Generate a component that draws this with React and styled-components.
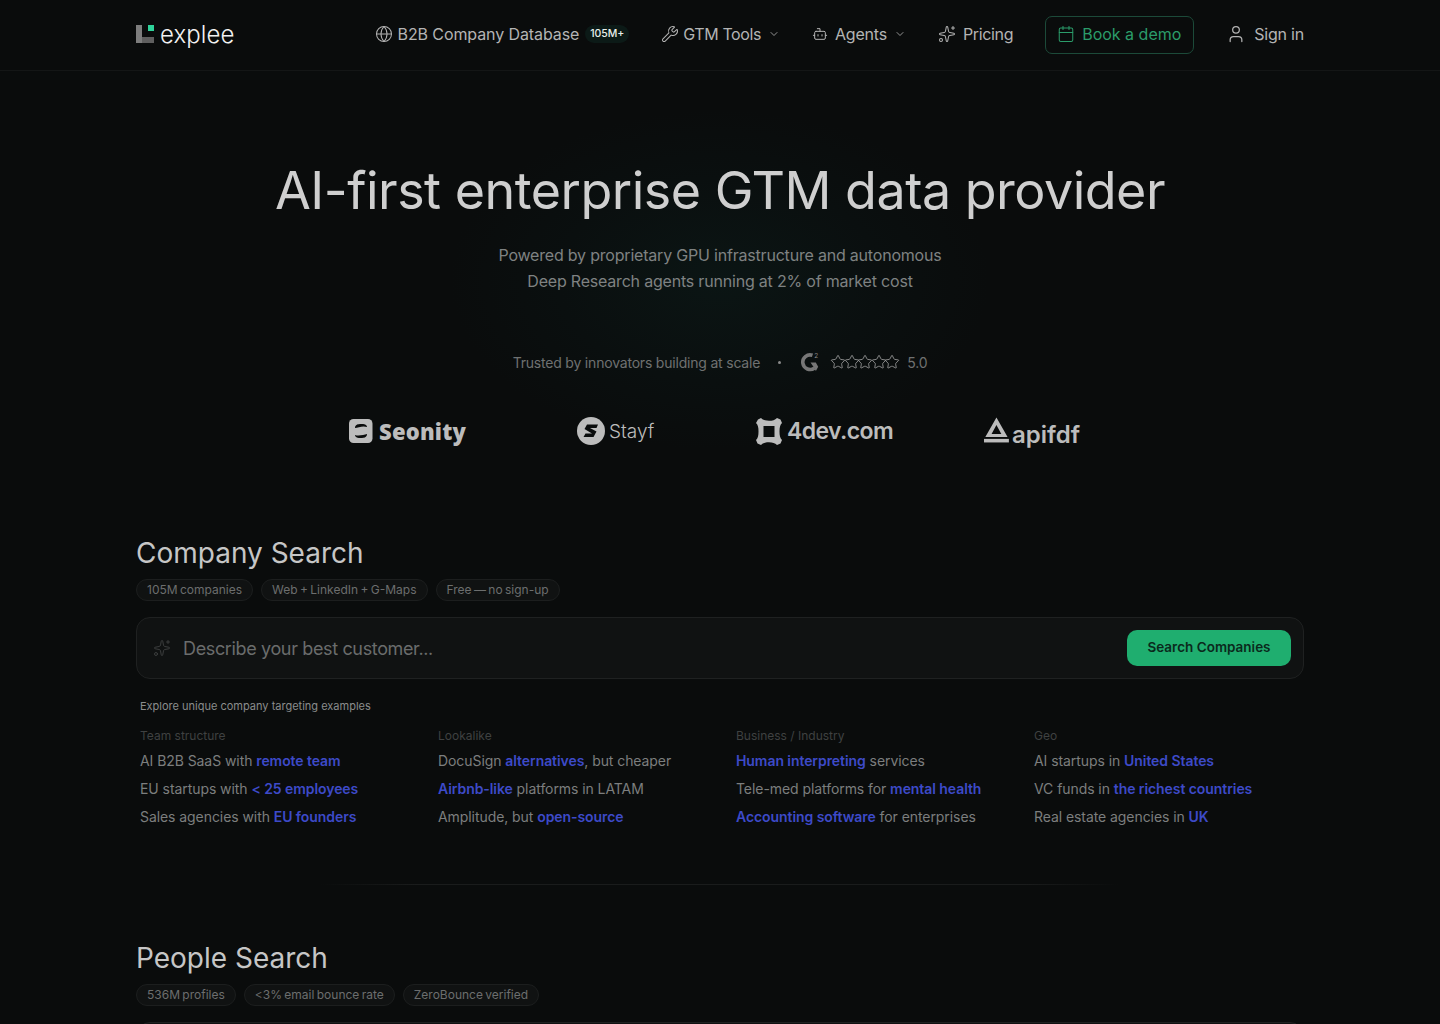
import React from "react";
import styled, { createGlobalStyle } from "styled-components";
import { Globe, Wrench, ChevronDown, Bot, Sparkles, Calendar, User, Star } from "lucide-react";

const GlobalStyle = createGlobalStyle`
  html, body {
    margin: 0;
    padding: 0;
    background: #0a0c0c;
    overflow: hidden;
    height: 1024px;
  }
  body {
    font-family: Inter, "Liberation Sans", sans-serif;
    color: #c8c8c8;
  }
  * { box-sizing: border-box; }
`;

const Page = styled.div`
  position: relative;
  width: 1440px;
  height: 1024px;
  overflow: hidden;
  background: radial-gradient(ellipse 270px 170px at 720px 280px, #0b1514 0%, #0a0f0f 60%, #0a0c0c 100%);
`;

const Header = styled.header`
  height: 71px;
  padding: 0 136px 3px;
  display: flex;
  align-items: center;
  justify-content: space-between;
  border-bottom: 1px solid #141616;
`;

const Brand = styled.div`
  display: flex;
  align-items: center;
  gap: 6px;
`;

const BrandName = styled.span`
  font-size: 24px;
  font-weight: 300;
  letter-spacing: 0.1px;
  color: #f2f2f2;
  line-height: 1;
  margin-top: 3px;
`;

const Nav = styled.nav`
  display: flex;
  align-items: center;
`;

const NavItem = styled.a`
  display: flex;
  align-items: center;
  gap: ${p => p.$gap || 6}px;
  margin-left: ${p => p.$ml || 0}px;
  font-size: 16px;
  letter-spacing: ${p => p.$ls ?? -0.2}px;
  color: #b4b4b4;
  white-space: nowrap;
  svg { flex-shrink: 0; }
`;

const NavChevron = styled(ChevronDown)`
  margin-left: 3px;
`;

const NavBadge = styled.span`
  height: 18px;
  width: 44px;
  margin-left: 1px;
  display: flex;
  align-items: center;
  justify-content: center;
  border-radius: 9px;
  background: #0c1a17;
  color: #e8efec;
  font-size: 10.5px;
  letter-spacing: 0;
  font-weight: 500;
`;

const DemoButton = styled.a`
  display: flex;
  align-items: center;
  gap: 7px;
  width: 149px;
  height: 38px;
  margin: 2px 0 0 32px;
  padding: 0 0 2px 11px;
  border: 1px solid #1c4a39;
  border-radius: 7px;
  color: #2b9c6a;
  font-size: 16px;
  letter-spacing: 0;
  white-space: nowrap;
`;

const Hero = styled.section`
  display: flex;
  flex-direction: column;
  align-items: center;
  padding-top: 84px;
`;

const Title = styled.h1`
  margin: 0;
  font-size: 52px;
  font-weight: 400;
  line-height: 72px;
  letter-spacing: -0.5px;
  color: #cfcfcf;
`;

const Subtitle = styled.p`
  margin: 15px 0 0;
  font-size: 16px;
  line-height: 26px;
  letter-spacing: -0.2px;
  color: #7f8282;
  text-align: center;
`;

const Trust = styled.div`
  display: flex;
  align-items: center;
  margin-top: 56px;
  height: 24px;
  font-size: 14px;
  letter-spacing: -0.2px;
  color: #6f7171;
`;

const Dot = styled.span`
  width: 3px;
  height: 3px;
  margin: 0 19px 0 18px;
  background: #8a8a8a;
  border-radius: 50%;
`;

const Stars = styled.div`
  display: flex;
  margin: 0 8px 0 11px;
  color: #a4a4a4;
  svg { margin: 0 -1.2px; }
`;

const LogoRow = styled.div`
  display: flex;
  align-items: center;
  justify-content: center;
  margin-top: 27px;
  height: 60px;
  width: 760px;
  padding-right: 11px;
`;

const LogoItem = styled.div`
  width: ${p => p.$w}px;
  display: flex;
  align-items: ${p => p.$align || "center"};
  gap: ${p => p.$gap || 6}px;
  color: #bcbcbc;
  flex-shrink: 0;
`;

const LogoWord = styled.span`
  font-family: ${p => p.$font || "Inter"}, sans-serif;
  font-size: ${p => p.$size}px;
  font-weight: ${p => p.$weight};
  letter-spacing: ${p => p.$ls || 0}px;
  line-height: 1;
`;

const ApifdfSvg = styled.svg`
  margin-bottom: 3px;
`;

const Section = styled.section`
  width: 1168px;
  margin: 0 auto;
  padding-top: ${p => p.$pt}px;
`;

const SectionTitle = styled.h2`
  margin: 0;
  font-size: 28px;
  font-weight: 400;
  line-height: 36px;
  color: #c6c6c6;
`;

const ChipRow = styled.div`
  display: flex;
  gap: 8px;
  margin-top: 8px;
`;

const Chip = styled.span`
  height: 22px;
  padding: 0 10px 2px;
  display: flex;
  align-items: center;
  border: 1px solid #1c1e1e;
  border-radius: 11px;
  background: #101212;
  color: #6c6e6e;
  font-size: 12px;
  word-spacing: -1px;
  white-space: nowrap;
`;

const SearchBox = styled.div`
  display: flex;
  align-items: center;
  height: 62px;
  margin-top: 16px;
  padding: 0 12px 0 16px;
  border: 1px solid #1f2121;
  border-radius: 14px;
  background: #101212;
  color: #3e4040;
`;

const Placeholder = styled.span`
  flex: 1;
  margin-left: 12px;
  font-size: 18px;
  letter-spacing: -0.36px;
  color: #6a6c6c;
`;

const SearchButton = styled.button`
  width: 164px;
  height: 36px;
  padding: 0 0 2px;
  border: 0;
  border-radius: 10px;
  background: #1fae6f;
  color: #0a2a1c;
  font-family: inherit;
  font-size: 13.5px;
  font-weight: 600;
`;

const Examples = styled.div`
  padding: 19px 4px 0;
`;

const ExamplesTitle = styled.div`
  font-size: 11px;
  line-height: 16px;
  color: #8a8c8c;
`;

const ExamplesGrid = styled.div`
  display: grid;
  grid-template-columns: repeat(4, 1fr);
  column-gap: 32px;
  margin-top: 14px;
`;

const Category = styled.div`
  font-size: 12px;
  line-height: 16px;
  color: #3f4141;
  margin-bottom: 3px;
`;

const ExampleLine = styled.div`
  font-size: 14px;
  line-height: 28px;
  letter-spacing: -0.07px;
  color: #7c7e7e;
  white-space: nowrap;
`;

const Hl = styled.b`
  font-weight: 600;
  color: #3d4ac8;
`;

const Divider = styled.div`
  height: 1px;
  width: 800px;
  margin: 53px auto 0;
  background: linear-gradient(90deg, transparent, #1a1c1c 12%, #1a1c1c 88%, transparent);
`;

const LogoMark = () => (
  <svg width="18" height="18" viewBox="0 0 18 18">
    <rect x="0" y="0" width="6" height="18" fill="#7d7d7d" />
    <rect x="6" y="12" width="12" height="6" fill="#5f5f5f" />
    <rect x="12" y="0" width="6" height="6" fill="#2ed39a" />
  </svg>
);

const G2 = () => (
  <svg width="20" height="20" viewBox="0 0 20 20">
    <path d="M12.500 3.300A7.300 7.300 0 1 0 14.500 16" fill="none" stroke="#777" strokeWidth="3.600" />
    <path d="M10.500 10.500h5.300l2.400 4.300-2.300 4.200-2.500-4.200z" fill="#777" />
    <text x="14.200" y="6" fontSize="6.500" fontFamily="Inter, sans-serif" fill="#8a8a8a">2</text>
  </svg>
);

const SeonityIcon = () => (
  <svg width="24" height="24" viewBox="0 0 24 24">
    <rect width="23.500" height="24" rx="4.500" fill="#bcbcbc" />
    <path d="M6 9c0-3.500 3-4 6-4s6 .5 6 3c-4-1.500-9 .5-12 1zM18 15c0 3.500-3 4-6 4s-6-.5-6-3c4 1.500 9-.5 12-1z" fill="#0a0c0c" />
  </svg>
);

const StayfIcon = () => (
  <svg width="28" height="28" viewBox="0 0 28 28">
    <circle cx="14" cy="14" r="14" fill="#bcbcbc" />
    <path d="M7.500 12 10 7.500h11L19.500 11H13l6.500 3.500-3 5.500H6.500L8.500 16.500H15z" fill="#0a0c0c" />
  </svg>
);

const FourDevIcon = () => (
  <svg width="26" height="27" viewBox="0 0 26 27">
    <path fillRule="evenodd" d="M2 1.500 5 0c2 2 4.500 2.800 8 2.800S19 2 21 0l3.500 1.500L26 5c-2 2-2.500 4.500-2.500 8.500s.5 6.500 2.500 8.500l-1.500 3.500L21 27c-2-2-4.500-2.800-8-2.800S7 25 5 27l-3.500-1.500L0 22c2-2 2.500-4.500 2.500-8.500S2 7 0 5zM7.500 8v11h11V8z" fill="#bcbcbc" />
  </svg>
);

const ApifdfIcon = () => (
  <ApifdfSvg width="28" height="28" viewBox="0 0 28 28">
    <path fillRule="evenodd" d="M14 0 26.500 22H1.500zM14 8.500 8.500 18.500h11z" fill="#bcbcbc" />
    <rect x="0" y="24" width="28" height="4" fill="#bcbcbc" />
  </ApifdfSvg>
);

const companyColumns = [
  { title: "Team structure", lines: [
    <>AI B2B SaaS with <Hl>remote team</Hl></>,
    <>EU startups with <Hl>&lt; 25 employees</Hl></>,
    <>Sales agencies with <Hl>EU founders</Hl></>,
  ] },
  { title: "Lookalike", lines: [
    <>DocuSign <Hl>alternatives</Hl>, but cheaper</>,
    <><Hl>Airbnb-like</Hl> platforms in LATAM</>,
    <>Amplitude, but <Hl>open-source</Hl></>,
  ] },
  { title: "Business / Industry", lines: [
    <><Hl>Human interpreting</Hl> services</>,
    <>Tele-med platforms for <Hl>mental health</Hl></>,
    <><Hl>Accounting software</Hl> for enterprises</>,
  ] },
  { title: "Geo", lines: [
    <>AI startups in <Hl>United States</Hl></>,
    <>VC funds in <Hl>the richest countries</Hl></>,
    <>Real estate agencies in <Hl>UK</Hl></>,
  ] },
];

const App = () => (
  <Page>
    <GlobalStyle />
    <Header>
      <Brand>
        <LogoMark />
        <BrandName>explee</BrandName>
      </Brand>
      <Nav>
        <NavItem $gap={5} $ls={-0.1}>
          <Globe size={18} strokeWidth={1.35} />
          B2B Company Database
          <NavBadge>105M+</NavBadge>
        </NavItem>
        <NavItem $ml={32} $gap={4} $ls={-0.4}>
          <Wrench size={18} strokeWidth={1.35} />
          GTM Tools
          <NavChevron size={12} strokeWidth={1.6} />
        </NavItem>
        <NavItem $ml={32} $gap={7}>
          <Bot size={16} strokeWidth={1.5} />
          Agents
          <ChevronDown size={12} strokeWidth={1.6} />
        </NavItem>
        <NavItem $ml={32} $gap={7} $ls={-0.35}>
          <Sparkles size={18} strokeWidth={1.35} />
          Pricing
        </NavItem>
        <DemoButton>
          <Calendar size={18} strokeWidth={1.35} />
          Book a demo
        </DemoButton>
        <NavItem $ml={32} $gap={8}>
          <User size={20} strokeWidth={1.5} />
          Sign in
        </NavItem>
      </Nav>
    </Header>

    <Hero>
      <Title>AI-first enterprise GTM data provider</Title>
      <Subtitle>
        Powered by proprietary GPU infrastructure and autonomous
        <br />
        Deep Research agents running at 2% of market cost
      </Subtitle>
      <Trust>
        Trusted by innovators building at scale
        <Dot />
        <G2 />
        <Stars>
          {[0, 1, 2, 3, 4].map(i => (
            <Star key={i} size={16} strokeWidth={1.2} />
          ))}
        </Stars>
        5.0
      </Trust>
      <LogoRow>
        <LogoItem $w={228}>
          <SeonityIcon />
          <LogoWord $font="Open Sans" $size={22} $weight={800} $ls={0.2}>Seonity</LogoWord>
        </LogoItem>
        <LogoItem $w={179} $gap={4}>
          <StayfIcon />
          <LogoWord $size={19} $weight={300}>Stayf</LogoWord>
        </LogoItem>
        <LogoItem $w={228} $gap={5}>
          <FourDevIcon />
          <LogoWord $size={23} $weight={600} $ls={-0.6}>4dev.com</LogoWord>
        </LogoItem>
        <LogoItem $w={96} $align="flex-end" $gap={3}>
          <ApifdfIcon />
          <LogoWord $size={24} $weight={600}>apifdf</LogoWord>
        </LogoItem>
      </LogoRow>
    </Hero>

    <Section $pt={74}>
      <SectionTitle>Company Search</SectionTitle>
      <ChipRow>
        <Chip>105M companies</Chip>
        <Chip>Web + LinkedIn + G-Maps</Chip>
        <Chip>Free — no sign-up</Chip>
      </ChipRow>
      <SearchBox>
        <Sparkles size={18} strokeWidth={1.25} />
        <Placeholder>Describe your best customer...</Placeholder>
        <SearchButton>Search Companies</SearchButton>
      </SearchBox>
      <Examples>
        <ExamplesTitle>Explore unique company targeting examples</ExamplesTitle>
        <ExamplesGrid>
          {companyColumns.map(col => (
            <div key={col.title}>
              <Category>{col.title}</Category>
              {col.lines.map((line, i) => (
                <ExampleLine key={i}>{line}</ExampleLine>
              ))}
            </div>
          ))}
        </ExamplesGrid>
      </Examples>
    </Section>

    <Divider />

    <Section $pt={55}>
      <SectionTitle>People Search</SectionTitle>
      <ChipRow>
        <Chip>536M profiles</Chip>
        <Chip>&lt;3% email bounce rate</Chip>
        <Chip>ZeroBounce verified</Chip>
      </ChipRow>
      <SearchBox />
    </Section>
  </Page>
);

export default App;
